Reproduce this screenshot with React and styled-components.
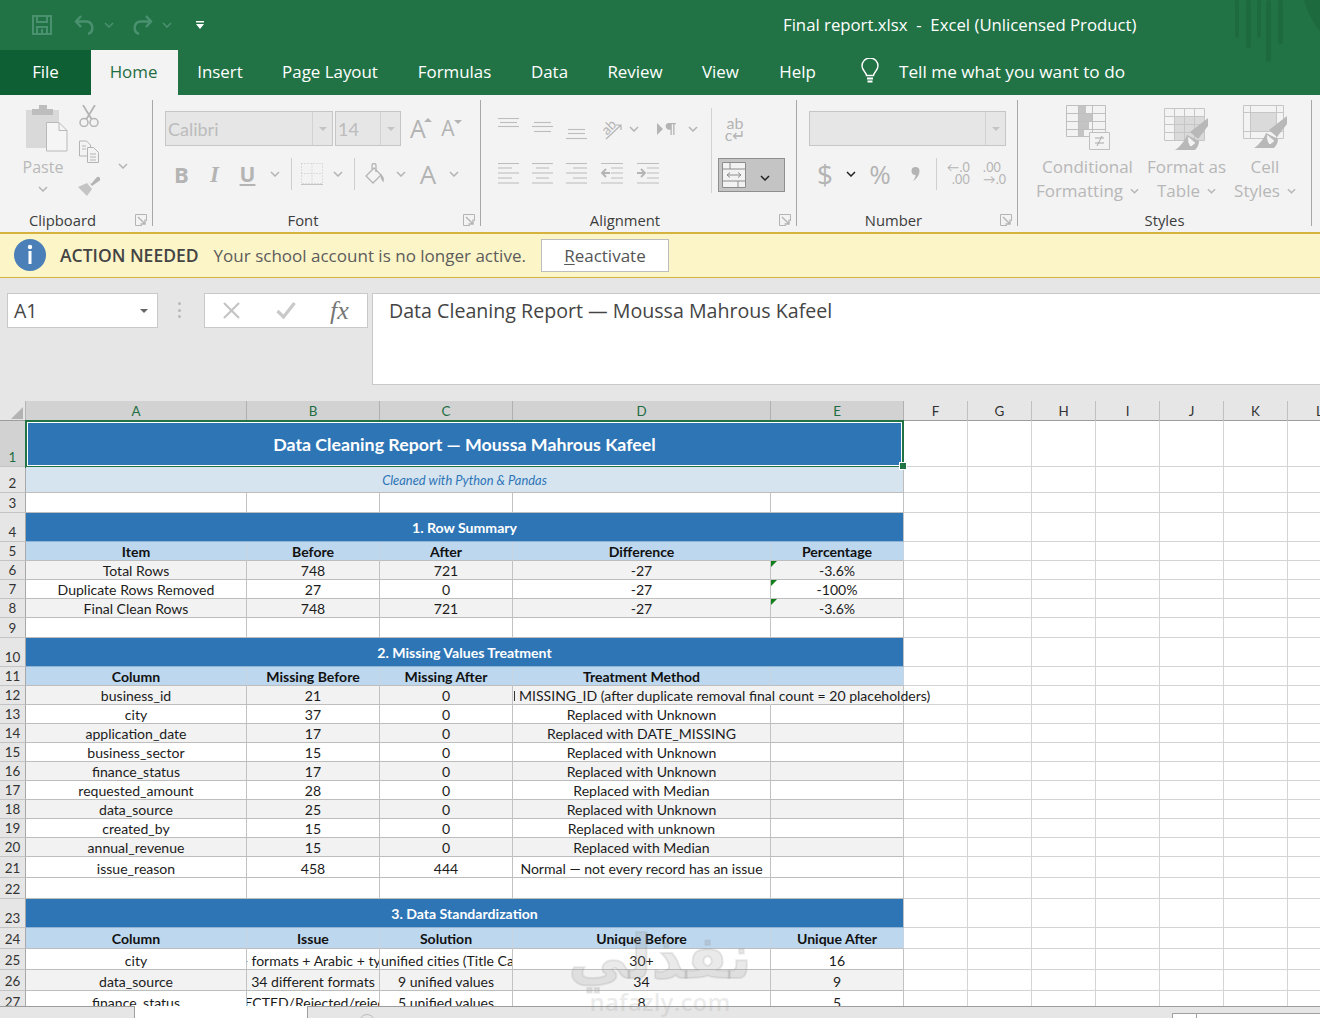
import React from "react";
import styled, { createGlobalStyle } from "styled-components";

const Global = createGlobalStyle`
  html, body { margin: 0; padding: 0; overflow: hidden; background: #e6e6e6; }
  * { box-sizing: border-box; }
`;
const UI = `"Open Sans", "Noto Sans", sans-serif`;
const CELL = `"Lato", "Open Sans", sans-serif`;
const GREEN = "#217346";

const Page = styled.div`
  width: 1320px; height: 1018px; overflow: hidden; position: relative;
  display: flex; flex-direction: column; font-family: ${UI}; background: #e6e6e6;
`;
const TitleBar = styled.div`
  height: 50px; background: ${GREEN}; display: flex; align-items: center; flex: none;
`;
const QatItem = styled.span`
  display: inline-flex; align-items: center; justify-content: center; flex: none;
  width: ${p => p.$w}px; margin-left: ${p => p.$ml || 0}px;
`;
const DocTitle = styled.div`
  position: absolute; left: 783px; top: 13px; color: #fff; font-size: 16.75px; line-height: 24px; white-space: pre;
`;
const Stripes = styled.svg`position: absolute; right: 0; top: 0; pointer-events: none;`;
const TabBar = styled.div`height: 45px; background: ${GREEN}; display: flex; flex: none; align-items: stretch;`;
const Tab = styled.div`
  width: ${p => p.$w}px; display: flex; align-items: center; justify-content: center; flex: none;
  font-size: 16.9px; padding-bottom: 3px; padding-right: ${p => (p.$active ? 2 : 0)}px;
  color: ${p => (p.$active ? "#1f6e43" : "#fff")};
  background: ${p => (p.$active ? "#f3f3f3" : p.$file ? "#0f5f35" : "transparent")};
`;
const Search = styled.div`
  display: flex; align-items: center; margin-left: 24px; color: #fff; font-size: 17.2px; padding-bottom: 3px;
  span { margin-left: 19px; }
`;
const Ribbon = styled.div`
  height: 137px; flex: none; background: #f3f3f3; display: flex; padding-top: 5px; align-items: stretch;
`;
const GroupSep = styled.div`width: 1px; background: #a8a8a8; margin-bottom: 6px; flex: none;`;
const Group = styled.div`width: ${p => p.$w}px; flex: none; display: flex; flex-direction: column;`;
const GroupBody = styled.div`height: 110px; flex: none; display: flex; padding-left: ${p => p.$pl || 0}px;`;
const GroupFooter = styled.div`height: 20px; display: flex; align-items: center;`;
const GroupLabel = styled.div`flex: 1; text-align: center; font-size: 14.8px; color: #3c3c3c; line-height: 20px;`;
const LauncherSlot = styled.div`width: 27px; display: flex; justify-content: flex-end; padding-right: 5px;`;
const PasteCol = styled.div`width: 40px; flex: none; display: flex; flex-direction: column; align-items: center; padding-top: 5px;`;
const PasteLabel = styled.div`font-size: 16px; line-height: 20px; color: #b9b9b9; margin-top: 5px; margin-bottom: 9px;`;
const PasteSlot = styled.div`align-self: flex-start; height: 47px; margin-left: 3px;`;
const SmallCol = styled.div`display: flex; flex-direction: column; gap: 13px; padding-top: 5px; margin-left: 15px; flex: none;`;
const ClipChevron = styled.div`margin: 52px 0 0 18px; flex: none;`;
const Stack = styled.div`display: flex; flex-direction: column; flex: none; width: ${p => (p.$w ? p.$w + "px" : "auto")};`;
const ToolRow = styled.div`
  display: flex; align-items: center; height: ${p => p.$h || 35}px; margin-top: ${p => p.$mt || 0}px; flex: none;
  gap: ${p => p.$gap || 0}px;
`;
const Combo = styled.div`
  width: ${p => p.$w}px; height: 35px; background: #e6e6e6; border: 1px solid #c6c6c6; display: flex; flex: none;
  margin-left: ${p => p.$ml || 0}px; color: #bcbcbc; font-size: 18px; font-family: ${CELL};
`;
const ComboText = styled.div`flex: 1; padding-left: 2px; line-height: 34px;`;
const ComboBtn = styled.div`width: 20px; border-left: 1px solid #d2d2d2; display: flex; align-items: center; justify-content: center;`;
const DownTri = styled.i`width: 0; height: 0; border: 4px solid transparent; border-top: 4px solid ${p => p.$c || "#c4c4c4"}; border-bottom: 0; display: block;`;
const Tool = styled.div`
  width: ${p => p.$w}px; margin-left: ${p => p.$ml || 0}px; flex: none; display: flex; align-items: center; justify-content: center;
  color: ${p => p.$c || "#b4b4b4"}; font-family: ${p => p.$serif ? `"Liberation Serif", serif` : UI};
  font-size: ${p => p.$fs || 20}px; font-weight: ${p => p.$b ? 700 : 400}; font-style: ${p => p.$i ? "italic" : "normal"};
  text-decoration: ${p => p.$u ? "underline" : "none"}; line-height: 1;
`;
const FontSizeA = styled.span`
  font-size: ${p => p.$fs}px; color: #b4b4b4; font-family: ${UI}; font-weight: 400; line-height: 1; position: relative; display: inline-block;
`;
const Caret = styled.i`
  position: absolute; right: ${p => p.$r}px; top: 2px; width: 0; height: 0; border-left: 4px solid transparent; border-right: 4px solid transparent;
  ${p => p.$up ? `border-bottom: 4px solid #b4b4b4;` : `border-top: 4px solid #b4b4b4;`}
`;
const RowSep = styled.div`width: 1px; height: 32px; background: #cfcfcf; flex: none; margin: 0 5px;`;
const TallSep = styled.div`width: 1px; height: 85px; background: #d2d2d2; margin-top: 8px; flex: none;`;
const WrapBlock = styled.div`display: flex; flex-direction: column; margin-left: 6px; flex: none; padding-top: 17px;`;
const WrapText = styled.div`
  width: 34px; font-family: ${CELL}; color: #b4b4b4; font-size: 16px; line-height: 12px; text-align: center; height: 23px;
`;
const MergeBtn = styled.div`
  width: 67px; height: 34px; margin-top: 18px; background: #c4c4c4; border: 1px solid #8f8f8f; display: flex; align-items: center; padding-left: 3px; flex: none;
`;
const MergeChevron = styled.div`margin-left: 14px;`;
const DecText = styled.div`
  font-size: 12.5px; line-height: 12px; color: #b4b4b4; font-family: ${CELL}; text-align: ${p => p.$a || "left"};
  letter-spacing: .2px; width: ${p => p.$w}px; margin-left: ${p => p.$ml || 0}px; flex: none; white-space: nowrap;
`;
const StyleCol = styled.div`
  width: ${p => p.$w}px; flex: none; display: flex; flex-direction: column; align-items: center; padding-top: 5px;
`;
const StyleIcon = styled.div`height: 47px; margin-bottom: 3px; display: flex; align-items: flex-start; justify-content: center; padding-top: ${p => p.$pt || 0}px;`;
const StyleLine = styled.div`
  font-size: 17px; line-height: 24px; color: #b7b7b7; white-space: nowrap; display: flex; align-items: center; gap: 7px;
`;
const InfoBar = styled.div`
  height: 46px; flex: none; background: #fcf5c7; border-top: 2px solid #d6b33f; border-bottom: 1px solid #d6b33f;
  display: flex; align-items: center; padding: 0 0 1px 14px;
`;
const InfoTitle = styled.div`font-weight: 600; color: #444; margin-left: 14px; font-size: 17.5px; white-space: nowrap;`;
const InfoText = styled.div`color: #5c5c5c; margin-left: 15px; white-space: nowrap; font-size: 17.03px;`;
const InfoBtn = styled.div`
  width: 128px; height: 33px; margin-left: 15px; background: #fff; border: 1px solid #bdbdbd; color: #555;
  display: flex; align-items: center; justify-content: center; font-size: 17px;
  u { text-underline-offset: 2px; }
`;
const FormulaRow = styled.div`
  height: 123px; flex: none; background: #e6e6e6; display: flex; align-items: flex-start; padding: 15px 0 0 7px;
`;
const NameBox = styled.div`
  width: 151px; height: 35px; background: #fff; border: 1px solid #c9c9c9; display: flex; align-items: center; justify-content: space-between;
  padding: 0 9px 0 6px; font-size: 19.5px; color: #444; flex: none;
`;
const Grip = styled.div`width: 3px; height: 16px; margin: 9px 0 0 20px; flex: none; display: flex; flex-direction: column; justify-content: space-between; i { display: block; height: 3px; background: #b9b9b9; border-radius: 50%; }`;
const FxBox = styled.div`
  width: 164px; height: 35px; margin-left: 23px; background: #fff; border: 1px solid #c9c9c9; display: flex; align-items: center; flex: none;
  padding-left: 17px;
`;
const FxMark = styled.span`font-family: "Liberation Serif", serif; font-style: italic; font-size: 26px; color: #777; margin-left: 34px; line-height: 1;`;
const CheckSlot = styled.span`margin-left: 35px; display: inline-flex;`;
const FormulaBox = styled.div`
  flex: 1; height: 92px; margin-left: 4px; background: #fff; border: 1px solid #c9c9c9; border-right: 0; padding: 3px 0 0 16px;
  font-family: ${UI}; font-size: 19.62px; line-height: 28px; color: #444; white-space: nowrap;
`;
const Sheet = styled.div`height: 605px; flex: none; overflow: hidden; background: #fff;`;
const COLS = "26px 221px 133px 133px 258px 133px 64px 64px 64px 64px 64px 64px 64px";
const HeaderRow = styled.div`display: grid; grid-template-columns: ${COLS}; height: 20px; background: #e6e6e6; border-bottom: 1px solid #9d9d9d;`;
const Corner = styled.div`
  border-right: 1px solid #b5b5b5; position: relative;
  &::after { content: ""; position: absolute; right: 2px; bottom: 2px; border-left: 12px solid transparent; border-bottom: 12px solid #b3b3b3; }
`;
const ColHead = styled.div`
  text-align: center; font-family: ${CELL}; font-size: 13.4px; line-height: 20px;
  border-right: 1px solid ${p => p.$sel ? "#b0b0b0" : "#c0c0c0"};
  background: ${p => p.$sel ? "#d2d2d2" : "transparent"}; color: ${p => p.$sel ? "#1f6e43" : "#333"};
`;
const Row = styled.div`display: grid; grid-template-columns: ${COLS}; height: ${p => p.$h}px; flex: none;`;
const RowHead = styled.div`
  background: ${p => p.$sel ? "#d2d2d2" : "#e6e6e6"}; color: ${p => p.$sel ? "#1f6e43" : "#333"};
  border-right: 1px solid #a8a8a8; border-bottom: 1px solid #c4c4c4;
  display: flex; align-items: flex-end; justify-content: center; font-family: ${CELL}; font-size: 13.4px; line-height: 17px;
`;
const CellBase = styled.div`
  font-family: ${CELL}; font-size: 14.05px; line-height: 17px; color: #1c1c1c; display: flex; justify-content: center; white-space: nowrap; overflow: hidden;
  align-items: ${p => p.$mid ? "center" : "flex-end"}; position: relative;
  background: ${p => p.$bg || "#fff"};
  border-right: 1px solid ${p => p.$line || "#c2c2c2"}; border-bottom: 1px solid #bdbdbd;
`;
const OverCell = styled(CellBase)`overflow: visible; justify-content: flex-start; padding-left: 6px; z-index: 2; border-right-color: #f2f2f2;
  &::before { content: ""; position: absolute; left: 1px; top: 5px; width: 1px; height: 10px; background: #333; }
`;
const HeadCell = styled(CellBase)`font-weight: 700; color: #111;`;
const ErrCell = styled(CellBase)`
  &::before { content: ""; position: absolute; left: 0; top: 0; border-top: 6px solid #127f1c; border-right: 6px solid transparent; }
`;
const Merged = styled.div`
  grid-column: span 5; display: flex; align-items: center; justify-content: center; position: relative; font-family: ${CELL};
`;
const TitleCell = styled(Merged)`
  background: #2e75b6; color: #fff; font-weight: 700; font-size: 17.8px; margin: -1px 0 -1px -1px;
  box-shadow: inset 0 0 0 2px ${GREEN}, inset 0 0 0 3px #fff;
`;
const Handle = styled.i`position: absolute; right: -3px; bottom: -2px; width: 8px; height: 8px; background: ${GREEN}; border: 1px solid #fff; z-index: 3;`;
const SubCell = styled(Merged)`background: #d6e4f0; color: #2e75b6; font-style: italic; font-size: 12.9px; border-bottom: 1px solid #bdbdbd; border-right: 1px solid #bdbdbd;`;
const SectionCell = styled(Merged)`background: #2e75b6; color: #fff; font-weight: 700; font-size: 14.1px; border-bottom: 1px solid #8fb4d6; border-right: 1px solid #c2c2c2;`;
const FreeCell = styled.div`border-right: 1px solid #d4d4d4; border-bottom: 1px solid #d4d4d4; background: #fff;`;
const BottomBar = styled.div`
  flex: 1; background: #e6e6e6; border-top: 1px solid #9d9d9d; display: flex; align-items: flex-start; position: relative;
`;
const SheetTab = styled.div`width: 174px; height: 12px; margin-left: 134px; background: #fff; border-left: 1px solid #a0a0a0; border-right: 1px solid #a0a0a0; flex: none; margin-top: -1px;`;
const AddSheet = styled.div`width: 16px; height: 16px; border: 1px solid #bcbcbc; border-radius: 50%; margin: 7px 0 0 51px; flex: none;`;
const ScrollBox = styled.div`width: 25px; height: 6px; margin: 6px 0 0 797px; background: #fff; border: 1px solid #a0a0a0; border-bottom: 0; flex: none;`;
const ScrollTrack = styled.div`flex: 1; height: 6px; margin-top: 6px; background: #fff; border-top: 1px solid #a0a0a0;`;
const Watermark = styled.div`
  position: absolute; left: 560px; top: 924px; width: 200px; text-align: center; pointer-events: none; z-index: 5;
  color: rgba(150, 150, 150, .2); line-height: 1; white-space: nowrap;
`;
const WmArabic = styled.div`font-family: "DejaVu Sans", sans-serif; font-weight: 700; font-size: 60px; line-height: 66px; -webkit-text-stroke: 2px rgba(150, 150, 150, .2);`;
const WmLatin = styled.div`font-family: "Open Sans", sans-serif; font-weight: 600; font-size: 24px; line-height: 24px; letter-spacing: .2px;`;

const Chevron = ({ w = 10, h = 6, c = "#b4b4b4", sw = 1.5 }) => (
  <svg width={w} height={h} viewBox="0 0 10 6" fill="none" stroke={c} strokeWidth={sw}><path d="M1 1l4 4 4-4" /></svg>
);
const Launcher = () => (
  <svg width="12" height="12" viewBox="0 0 12 12" fill="none" stroke="#b4b4b4" strokeWidth="1"><path d="M11.5 7V.5H.5v11H7" /><path d="M3 3l7 7M10 5.5V10H5.5" strokeWidth="1.4" /></svg>
);
const SaveIcon = () => (
  <svg width="20" height="20" viewBox="0 0 20 20" fill="none" stroke="#4a9170" strokeWidth="2"><path d="M1 1h18v18H1z" /><path d="M5 1v6h10V1M5 19v-7h10v7" /><path d="M9 14h2v5H9z" fill="#4a9170" strokeWidth="0" /></svg>
);
const UndoIcon = ({ flip }) => (
  <svg width="22" height="20" viewBox="0 0 22 20" fill="none" stroke="#4a9170" strokeWidth="2.4" style={flip ? { transform: "scaleX(-1)" } : undefined}>
    <path d="M7 1L2 6.5 7 12" /><path d="M2 6.5h11a6.5 6.5 0 0 1 1 12.5" />
  </svg>
);
const Customize = () => (
  <svg width="8" height="8" viewBox="0 0 8 8" fill="#fff"><path d="M0 0h8v1.4H0zM0 3h8L4 8z" /></svg>
);
const Bulb = () => (
  <svg width="20" height="26" viewBox="0 0 20 26" fill="none" stroke="#fff" strokeWidth="1.4"><path d="M6.5 17.5c0-3-4.5-5-4.500-9.500a8 8 0 0 1 16 0c0 4.500-4.500 6.500-4.500 9.500z" /><path d="M7 20.500h6M7.500 23.500h5" strokeWidth="1.800" /></svg>
);
const PasteIcon = () => (
  <svg width="42" height="47" viewBox="0 0 42 47">
    <path d="M0 5h33v38H0z" fill="#d9d9d9" />
    <path d="M6 4h21v6H6z" fill="#bdbdbd" /><path d="M13 0h8v5h-8z" fill="#bdbdbd" />
    <path d="M20.500 17.500H33L41 25.500V46H20.500z" fill="#f5f5f5" stroke="#b9b9b9" /><path d="M33 17.500v8h8" fill="none" stroke="#b9b9b9" />
  </svg>
);
const CutIcon = () => (
  <svg width="22" height="22" viewBox="0 0 22 22" fill="none" stroke="#b4b4b4" strokeWidth="1.500">
    <path d="M5 0l8.500 14M17 0L8.500 14" strokeWidth="1.800" /><circle cx="6" cy="17.500" r="4" /><circle cx="16" cy="17.500" r="4" />
  </svg>
);
const CopyIcon = () => (
  <svg width="22" height="23" viewBox="0 0 22 23" fill="#f3f3f3" stroke="#b4b4b4" strokeWidth="1">
    <path d="M1.500 1h7l4 4v11h-11z" /><path d="M9.500 7.500h6l5 5v10h-11z" /><path d="M12 14h6M12 17h6M12 20h6M4 6h4M4 9h4" fill="none" />
  </svg>
);
const BrushIcon = () => (
  <svg width="22" height="20" viewBox="0 0 22 20" fill="#c4c4c4"><path d="M0 11l9-4 5 6-5 7z" /><path d="M10 5l3 3 6-7q2-1 3 1t-1 3l-7 5z" fill="#b4b4b4" /></svg>
);
const GrowA = () => <Tool $w={24} $ml={5}><FontSizeA $fs={25}>A<Caret $up $r={-6} /></FontSizeA></Tool>;
const ShrinkA = () => <Tool $w={22} $ml={7}><FontSizeA $fs={21}>A<Caret $r={-7} /></FontSizeA></Tool>;
const BorderIcon = () => (
  <svg width="22" height="22" viewBox="0 0 22 22" fill="none" stroke="#c4c4c4" strokeDasharray="1 2"><path d="M.5.500h21v20H.5zM11 .5v20M.5 10.500h21" /><path d="M0 21.500h22" strokeDasharray="none" /></svg>
);
const FillIcon = () => (
  <svg width="20" height="22" viewBox="0 0 20 22" fill="none" stroke="#b4b4b4" strokeWidth="1.300"><path d="M9 5L1 13l7 7 8-8z" /><path d="M7 6V2.500a2 2 0 0 1 4 0V9" /><path d="M16 12q3 3 2 6-2-3-2-6z" fill="#c4c4c4" /></svg>
);
const Lines = ({ rows, w = 21 }) => (
  <svg width={w} height="22" viewBox={`0 0 ${w} 22`} stroke="#bdbdbd" strokeWidth="1.100">
    {rows.map(([y, a, b], i) => <path key={i} d={`M${a} ${y}H${b}`} />)}
  </svg>
);
const Orient = () => (
  <svg width="22" height="24" viewBox="0 0 22 24" fill="none">
    <text x="0" y="15" fontFamily="Lato, sans-serif" fontSize="14" fill="#b4b4b4" transform="rotate(-45 7 11)">ab</text>
    <path d="M4 22L19 8M14 8h5v5" stroke="#b4b4b4" strokeWidth="1.200" />
  </svg>
);
const Rtl = () => (
  <svg width="20" height="14" viewBox="0 0 20 14"><path d="M0 1l6 6-6 6z" fill="#b4b4b4" /><path d="M11 1h8v1.300h-1.500V13h-1.300V2.300h-1.400V13h-1.300V7.500a3.300 3.300 0 0 1-2.500-6.500z" fill="#b4b4b4" /></svg>
);
const Indent = ({ out }) => (
  <svg width="23" height="22" viewBox="0 0 23 22" fill="none" stroke="#bdbdbd" strokeWidth="1.100">
    <path d="M1 .5h22M11 5h12M11 10h12M11 15h12M1 20h22" />
    <path d={out ? "M2 10h8M6 6l-4 4 4 4" : "M1 10h8M5 6l4 4-4 4"} stroke="#b4b4b4" strokeWidth="1.800" />
  </svg>
);
const MergeIcon = () => (
  <svg width="24" height="26" viewBox="0 0 24 26" fill="#f2f2f2" stroke="#8c8c8c"><path d="M.5.500h23v25H.5z" /><path d="M.5 7h23M.5 19h23M8 .5V7M16 19v6.500" fill="none" /><path d="M5 13h14M8 10.500L5 13l3 2.500M16 10.500l3 2.500-3 2.500" fill="none" /></svg>
);
const CommaIcon = () => (
  <svg width="9" height="14" viewBox="0 0 9 14" fill="#b4b4b4"><path d="M4.500 0a4 4 0 0 1 4 4c0 4-3 8-6.500 10 1.500-2 2.500-4 2.500-6A4 4 0 0 1 4.500 0z" /></svg>
);
const Brush = ({ x, y }) => (
  <g transform={`translate(${x} ${y})`}>
    <path d="M33 0v8L23 21l-8-7z" fill="#b8b8b8" />
    <path d="M0 32C6 28 10 22 12 17l12 6c0 3-1 6-4 9z" fill="#b8b8b8" />
    <path d="M13 18l8 7-5 4c-3-2-4-6-3-11z" fill="#f3f3f3" stroke="#b8b8b8" />
  </g>
);
const CondIcon = () => (
  <svg width="44" height="46" viewBox="0 0 44 46" fill="none">
    <path d="M12 1h8v8h-8zM12 9h14v8H12zM12 17h11v8H12zM12 25h6v7h-6z" fill="#c4c4c4" />
    <path d="M.5.500h39v31H.5zM.5 8.500h39M.5 16.500h39M.5 24.500h39M12.500.5v31M26.500.5v31" stroke="#bfbfbf" />
    <path d="M23.500 27.500h20v17h-20z" fill="#f3f3f3" stroke="#bfbfbf" />
    <path d="M29 33h9M29 38h9M31 41l5-10" stroke="#a8a8a8" />
  </svg>
);
const TableIcon = () => (
  <svg width="46" height="43" viewBox="0 0 46 43" fill="none">
    <path d="M10 8h31v24H10z" fill="#dadada" />
    <path d="M.5.500h40v32H.5zM.5 8.500h40M.5 16.500h40M.5 24.500h40M10.500.5v32M20.500.5v32M30.500.5v32" stroke="#c6c6c6" />
    <Brush x={11} y={10} />
  </svg>
);
const CellStyleIcon = () => (
  <svg width="45" height="44" viewBox="0 0 45 44" fill="none">
    <path d="M7 7h27v19H7z" fill="#dadada" />
    <path d="M.5.500h40v33H.5zM.5 7.500h40M.5 26.500h40M7.500.5v33M33.500.5v33" stroke="#c6c6c6" />
    <Brush x={11} y={11} />
  </svg>
);
const InfoIcon = () => (
  <svg width="32" height="32" viewBox="0 0 32 32"><circle cx="16" cy="16" r="16" fill="#4a7fb8" /><circle cx="16" cy="8" r="2.200" fill="#fff" /><rect x="14.500" y="12" width="3" height="13" fill="#fff" /></svg>
);
const XIcon = () => <svg width="19" height="19" viewBox="0 0 19 19" stroke="#c4c4c4" strokeWidth="2.200"><path d="M2 2l15 15M17 2L2 17" /></svg>;
const CheckIcon = () => <svg width="20" height="17" viewBox="0 0 20 17" fill="none" stroke="#c9c9c9" strokeWidth="3.200"><path d="M1.500 9l6 6L18.500 1" /></svg>;

const D = (a, b, c, d, e = "") => ({ t: "data", c: [a, b, c, d, e] });
const H = (a, b, c, d, e = "") => ({ t: "head", c: [a, b, c, d, e] });
const ROWS = [
  { n: 1, h: 46, t: "title", text: "Data Cleaning Report — Moussa Mahrous Kafeel" },
  { n: 2, h: 26, t: "sub", text: "Cleaned with Python & Pandas" },
  { n: 3, h: 20, t: "blank" },
  { n: 4, h: 29, t: "section", text: "1. Row Summary" },
  { n: 5, h: 19, ...H("Item", "Before", "After", "Difference", "Percentage") },
  { n: 6, h: 19, alt: 1, err: 1, ...D("Total Rows", "748", "721", "-27", "-3.6%") },
  { n: 7, h: 19, err: 1, ...D("Duplicate Rows Removed", "27", "0", "-27", "-100%") },
  { n: 8, h: 19, alt: 1, err: 1, ...D("Final Clean Rows", "748", "721", "-27", "-3.6%") },
  { n: 9, h: 20, t: "blank" },
  { n: 10, h: 29, t: "section", text: "2. Missing Values Treatment" },
  { n: 11, h: 19, ...H("Column", "Missing Before", "Missing After", "Treatment Method") },
  { n: 12, h: 19, alt: 1, over: 1, ...D("business_id", "21", "0", "MISSING_ID (after duplicate removal final count = 20 placeholders)") },
  { n: 13, h: 19, ...D("city", "37", "0", "Replaced with Unknown") },
  { n: 14, h: 19, alt: 1, ...D("application_date", "17", "0", "Replaced with DATE_MISSING") },
  { n: 15, h: 19, ...D("business_sector", "15", "0", "Replaced with Unknown") },
  { n: 16, h: 19, alt: 1, ...D("finance_status", "17", "0", "Replaced with Unknown") },
  { n: 17, h: 19, ...D("requested_amount", "28", "0", "Replaced with Median") },
  { n: 18, h: 19, alt: 1, ...D("data_source", "25", "0", "Replaced with Unknown") },
  { n: 19, h: 19, ...D("created_by", "15", "0", "Replaced with unknown") },
  { n: 20, h: 19, alt: 1, ...D("annual_revenue", "15", "0", "Replaced with Median") },
  { n: 21, h: 21, ...D("issue_reason", "458", "444", "Normal — not every record has an issue") },
  { n: 22, h: 21, t: "blank" },
  { n: 23, h: 29, t: "section", text: "3. Data Standardization" },
  { n: 24, h: 21, ...H("Column", "Issue", "Solution", "Unique Before", "Unique After") },
  { n: 25, h: 21, ...D("city", "30+ formats + Arabic + typos", "16 unified cities (Title Case)", "30+", "16") },
  { n: 26, h: 21, alt: 1, ...D("data_source", "34 different formats", "9 unified values", "34", "9") },
  { n: 27, h: 21, ...D("finance_status", "REJECTED/Rejected/rejected", "5 unified values", "8", "5") },
];
const FREE = ["F", "G", "H", "I", "J", "K", "L"];
const Free = () => FREE.map(f => <FreeCell key={f} />);

function SheetRow({ r }) {
  const sel = r.n === 1;
  let body;
  if (r.t === "title") body = <TitleCell>{r.text}<Handle /></TitleCell>;
  else if (r.t === "sub") body = <SubCell>{r.text}</SubCell>;
  else if (r.t === "section") body = <SectionCell>{r.text}</SectionCell>;
  else if (r.t === "blank") body = [0, 1, 2, 3, 4].map(i => <CellBase key={i} />);
  else if (r.t === "head") body = r.c.map((x, i) => <HeadCell key={i} $mid $bg="#bdd7ee" $line="#c7d5e2">{x}</HeadCell>);
  else body = r.c.map((x, i) => {
    const bg = r.alt ? "#f2f2f2" : "#fff";
    if (i === 3 && r.over) return <OverCell key={i} $bg={bg}>{x}</OverCell>;
    if (i === 4 && r.err) return <ErrCell key={i} $bg={bg}>{x}</ErrCell>;
    return <CellBase key={i} $bg={bg}>{x}</CellBase>;
  });
  return <Row $h={r.h}><RowHead $sel={sel}>{r.n}</RowHead>{body}<Free /></Row>;
}

const Footer = ({ label, launcher }) => (
  <GroupFooter>
    <GroupLabel>{label}</GroupLabel>
    {launcher && <LauncherSlot><Launcher /></LauncherSlot>}
  </GroupFooter>
);

export default function App() {
  return (
    <Page>
      <Global />
      <TitleBar>
        <QatItem $w={20} $ml={32}><SaveIcon /></QatItem>
        <QatItem $w={22} $ml={22}><UndoIcon /></QatItem>
        <QatItem $w={10} $ml={8}><Chevron c="#4a9170" /></QatItem>
        <QatItem $w={22} $ml={17}><UndoIcon flip /></QatItem>
        <QatItem $w={10} $ml={9}><Chevron c="#4a9170" /></QatItem>
        <QatItem $w={8} $ml={24}><Customize /></QatItem>
        <DocTitle>Final report.xlsx  -  Excel (Unlicensed Product)</DocTitle>
      </TitleBar>
      <Stripes width="90" height="64" viewBox="0 0 90 64" fill="#1d6a3f">
        <rect x="5" y="0" width="4" height="38" rx="2" /><rect x="16" y="0" width="5" height="48" rx="2.500" />
        <rect x="27" y="0" width="4" height="38" rx="2" /><rect x="36" y="0" width="5" height="62" rx="2.500" />
        <rect x="48" y="0" width="5" height="44" rx="2.500" /><path d="M74 0h16v32C84 24 77 12 74 0z" />
      </Stripes>
      <TabBar>
        <Tab $w={91} $file>File</Tab>
        <Tab $w={87} $active>Home</Tab>
        <Tab $w={84}>Insert</Tab>
        <Tab $w={136}>Page Layout</Tab>
        <Tab $w={113}>Formulas</Tab>
        <Tab $w={77}>Data</Tab>
        <Tab $w={94}>Review</Tab>
        <Tab $w={77}>View</Tab>
        <Tab $w={77}>Help</Tab>
        <Search><Bulb /><span>Tell me what you want to do</span></Search>
      </TabBar>
      <Ribbon>
        <Group $w={152}>
          <GroupBody $pl={23}>
            <PasteCol>
              <PasteSlot><PasteIcon /></PasteSlot>
              <PasteLabel>Paste</PasteLabel>
              <Chevron />
            </PasteCol>
            <SmallCol><CutIcon /><CopyIcon /><BrushIcon /></SmallCol>
            <ClipChevron><Chevron /></ClipChevron>
          </GroupBody>
          <Footer label="Clipboard" launcher />
        </Group>
        <GroupSep />
        <Group $w={327}>
          <GroupBody $pl={12}>
            <Stack>
              <ToolRow $mt={11}>
                <Combo $w={168}><ComboText>Calibri</ComboText><ComboBtn><DownTri /></ComboBtn></Combo>
                <Combo $w={66} $ml={2}><ComboText>14</ComboText><ComboBtn><DownTri /></ComboBtn></Combo>
                <GrowA /><ShrinkA />
              </ToolRow>
              <ToolRow $mt={10} $h={36}>
                <Tool $w={33} $b $fs={22}>B</Tool>
                <Tool $w={33} $i $b $fs={23} $serif>I</Tool>
                <Tool $w={33} $u $fs={21} $b>U</Tool>
                <Tool $w={22}><Chevron /></Tool>
                <RowSep />
                <Tool $w={30}><BorderIcon /></Tool>
                <Tool $w={22}><Chevron /></Tool>
                <RowSep />
                <Tool $w={30}><FillIcon /></Tool>
                <Tool $w={22}><Chevron /></Tool>
                <Tool $w={38} $fs={26} $ml={-3}>A</Tool>
                <Tool $w={14}><Chevron /></Tool>
              </ToolRow>
            </Stack>
          </GroupBody>
          <Footer label="Font" launcher />
        </Group>
        <GroupSep />
        <Group $w={315}>
          <GroupBody $pl={17}>
            <Stack $w={213}>
              <ToolRow $mt={11} $gap={13}>
                <Lines rows={[[.5, 0, 21], [4.5, 2, 19], [8.5, 0, 21]]} />
                <Lines rows={[[4.5, 2, 19], [8.5, 0, 21], [13.5, 2, 19]]} />
                <Lines rows={[[11.5, 2, 19], [15.5, 2, 19], [20.5, 0, 21]]} />
                <Tool $w={22} $ml={2}><Orient /></Tool>
                <Tool $w={12} $ml={-9}><Chevron /></Tool>
                <Tool $w={20} $ml={4}><Rtl /></Tool>
                <Tool $w={12} $ml={-3}><Chevron /></Tool>
              </ToolRow>
              <ToolRow $mt={10} $h={36} $gap={13}>
                <Lines rows={[[.5, 0, 21], [5, 0, 14], [10, 0, 21], [15, 0, 14], [20, 0, 21]]} />
                <Lines rows={[[.5, 0, 21], [5, 4, 17], [10, 0, 21], [15, 4, 17], [20, 0, 21]]} />
                <Lines rows={[[.5, 0, 21], [5, 7, 21], [10, 0, 21], [15, 7, 21], [20, 0, 21]]} />
                <Indent out />
                <Indent />
              </ToolRow>
            </Stack>
            <TallSep />
            <WrapBlock>
              <WrapText>ab<br />c↵</WrapText>
              <MergeBtn><MergeIcon /><MergeChevron><Chevron c="#222" /></MergeChevron></MergeBtn>
            </WrapBlock>
          </GroupBody>
          <Footer label="Alignment" launcher />
        </Group>
        <GroupSep />
        <Group $w={220}>
          <GroupBody $pl={12}>
            <Stack>
              <ToolRow $mt={11}>
                <Combo $w={197}><ComboText /><ComboBtn><DownTri /></ComboBtn></Combo>
              </ToolRow>
              <ToolRow $mt={10} $h={36}>
                <Tool $w={32} $fs={28}>$</Tool>
                <Tool $w={20}><Chevron c="#222" /></Tool>
                <Tool $w={38} $fs={26}>%</Tool>
                <Tool $w={32}><CommaIcon /></Tool>
                <RowSep />
                <DecText $w={24} $ml={4} $a="right">←.0<br />.00</DecText>
                <DecText $w={22} $ml={13}>.00<br />→.0</DecText>
              </ToolRow>
            </Stack>
          </GroupBody>
          <Footer label="Number" launcher />
        </Group>
        <GroupSep />
        <Group $w={293}>
          <GroupBody $pl={12}>
            <StyleCol $w={115}>
              <StyleIcon><CondIcon /></StyleIcon>
              <StyleLine>Conditional</StyleLine>
              <StyleLine>Formatting <Chevron w={9} h={6} /></StyleLine>
            </StyleCol>
            <StyleCol $w={83}>
              <StyleIcon $pt={3}><TableIcon /></StyleIcon>
              <StyleLine>Format as</StyleLine>
              <StyleLine>Table <Chevron w={9} h={6} /></StyleLine>
            </StyleCol>
            <StyleCol $w={74}>
              <StyleIcon><CellStyleIcon /></StyleIcon>
              <StyleLine>Cell</StyleLine>
              <StyleLine>Styles <Chevron w={9} h={6} /></StyleLine>
            </StyleCol>
          </GroupBody>
          <Footer label="Styles" />
        </Group>
        <GroupSep />
      </Ribbon>
      <InfoBar>
        <InfoIcon />
        <InfoTitle>ACTION NEEDED</InfoTitle>
        <InfoText>Your school account is no longer active.</InfoText>
        <InfoBtn><span><u>R</u>eactivate</span></InfoBtn>
      </InfoBar>
      <FormulaRow>
        <NameBox>A1<DownTri $c="#666" /></NameBox>
        <Grip><i /><i /><i /></Grip>
        <FxBox><XIcon /><CheckSlot><CheckIcon /></CheckSlot><FxMark>fx</FxMark></FxBox>
        <FormulaBox>Data Cleaning Report — Moussa Mahrous Kafeel</FormulaBox>
      </FormulaRow>
      <Sheet>
        <HeaderRow>
          <Corner />
          {["A", "B", "C", "D", "E"].map(c => <ColHead key={c} $sel>{c}</ColHead>)}
          {FREE.map(c => <ColHead key={c}>{c}</ColHead>)}
        </HeaderRow>
        {ROWS.map(r => <SheetRow key={r.n} r={r} />)}
      </Sheet>
      <BottomBar>
        <SheetTab />
        <AddSheet />
        <ScrollBox />
        <ScrollTrack />
      </BottomBar>
      <Watermark>
        <WmArabic>نفذلي</WmArabic>
        <WmLatin>nafazly.com</WmLatin>
      </Watermark>
    </Page>
  );
}
